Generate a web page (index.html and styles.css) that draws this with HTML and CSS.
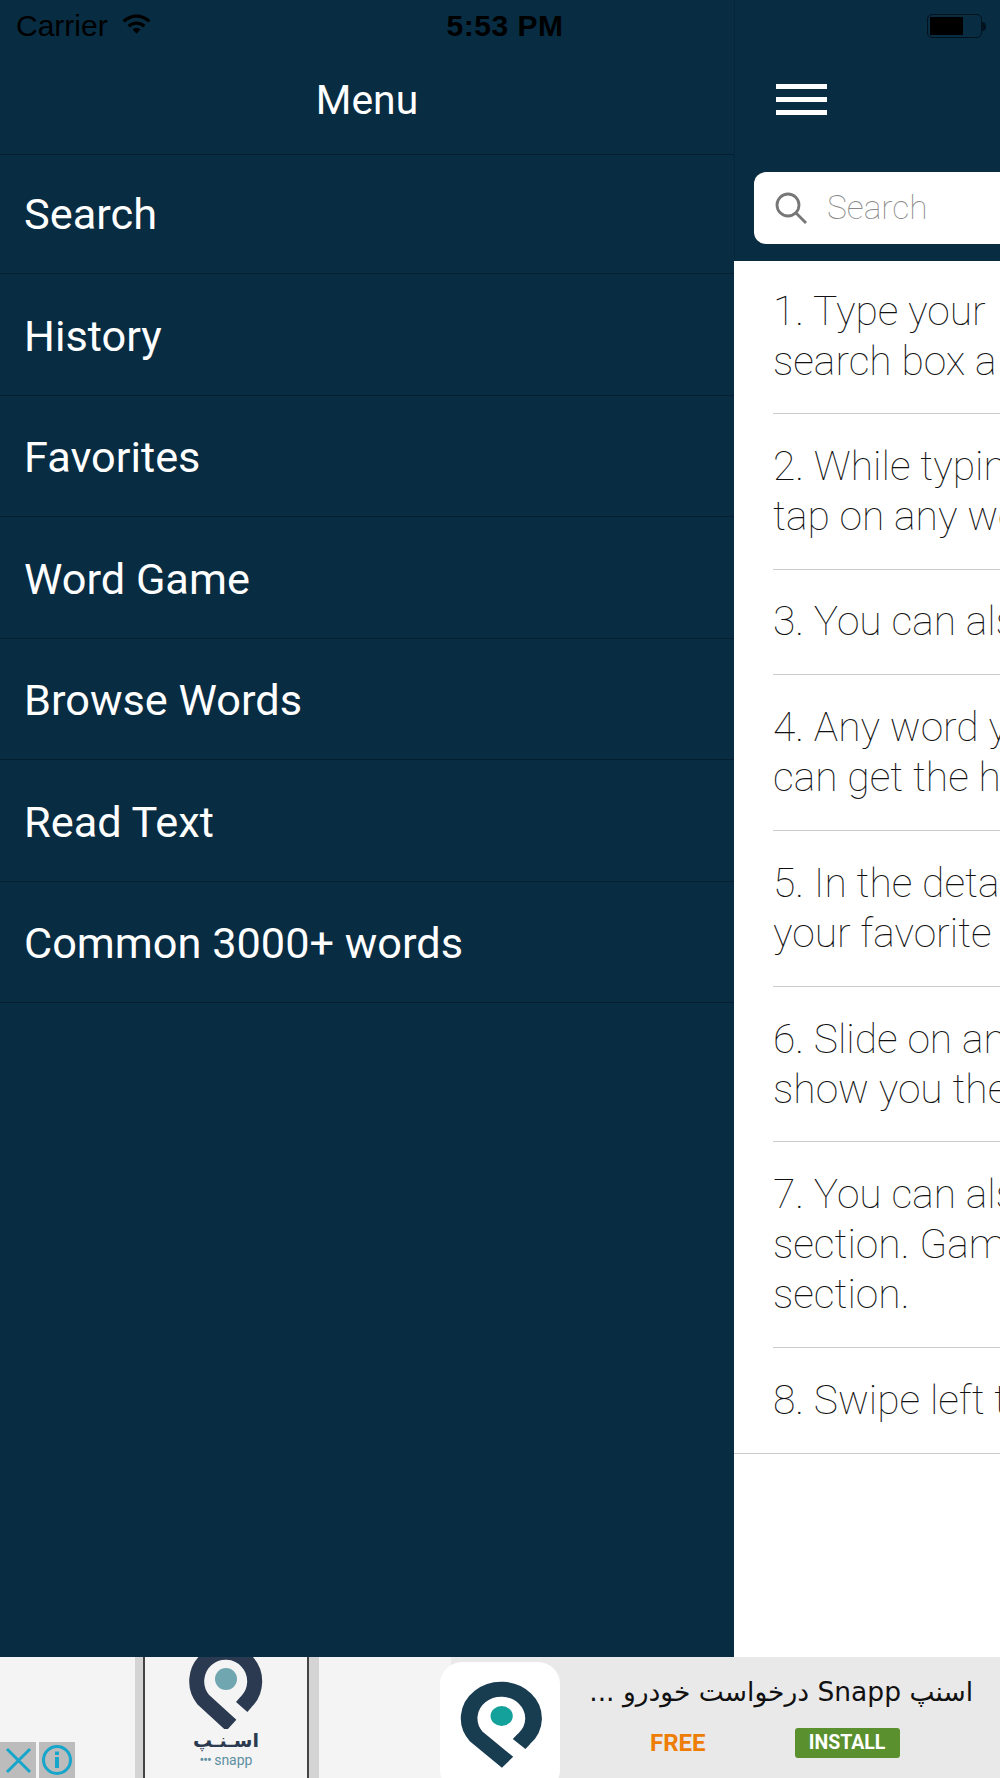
FILE: index.html
```html
<!DOCTYPE html>
<html lang="en">
<head>
<meta charset="utf-8">
<title>Menu</title>
<link rel="stylesheet" href="styles.css">
</head>
<body>
<div class="app">
  <div class="statusbar">
    <div class="status-left">
      <span>Carrier</span>
      <svg class="wifi" viewBox="0 0 30 22"><path d="M1 8.200C9 .6 21 .6 29 8.200l-2.300 2.400C20 4.200 10 4.200 3.300 10.600z"/><path d="M6 13C11 8.300 19 8.300 24 13l-2.400 2.400C18 12 12 12 8.400 15.400z"/><path d="M11 17.600c2.400-2 5.600-2 8 0L15 21.800z"/></svg>
    </div>
    <div class="status-time">5:53 PM</div>
    <div class="status-right">
      <div class="battery"><div class="battery-level"></div></div>
      <div class="battery-cap"></div>
    </div>
  </div>
  <main class="main">
    <nav class="drawer">
      <header class="drawer-head">Menu</header>
      <ul class="menu">
        <li class="menu-item menu-first">Search</li>
        <li class="menu-item">History</li>
        <li class="menu-item">Favorites</li>
        <li class="menu-item">Word Game</li>
        <li class="menu-item">Browse Words</li>
        <li class="menu-item">Read Text</li>
        <li class="menu-item">Common 3000+ words</li>
      </ul>
    </nav>
    <section class="page">
      <header class="page-head">
        <div class="burger"><span></span><span></span><span></span></div>
        <div class="searchbox">
          <svg class="search-icon" viewBox="0 0 32 32"><circle cx="13" cy="13" r="11" /><path d="M21 21l10 10"/></svg>
          <span class="placeholder">Search</span>
        </div>
      </header>
      <div class="help">
        <p class="help-item help-first">1. Type your<br>search box a</p>
        <p class="help-item">2. While typing<br>tap on any wo</p>
        <p class="help-item">3. You can also</p>
        <p class="help-item">4. Any word you<br>can get the he</p>
        <p class="help-item">5. In the details<br>your favorite</p>
        <p class="help-item">6. Slide on any<br>show you the</p>
        <p class="help-item">7. You can also<br>section. Game<br>section.</p>
        <p class="help-item help-last">8. Swipe left to</p>
      </div>
    </section>
  </main>
  <aside class="ad">
    <div class="ad-left">
      <div class="ad-shot">
        <svg class="shot-logo" viewBox="12 12 84 92"><path class="shot-pin" d="M69.700 82L74 77A29 29 0 1 0 31.300 74.700L59.300 100.300"/><circle class="shot-dot" cx="54" cy="54" r="11"/></svg>
        <div class="shot-fa" dir="rtl" lang="fa">اسـنـپ</div>
        <div class="shot-en"><span class="shot-dots">•••</span> snapp</div>
      </div>
      <div class="ad-controls">
        <span class="ad-btn"><svg viewBox="0 0 36 36"><path d="M7 7l23 23M30 7L7 30"/></svg></span>
        <span class="ad-btn"><svg viewBox="0 0 36 36"><circle cx="18" cy="18" r="13.500"/><rect class="info-mark" x="16" y="15" width="4" height="11"/><rect class="info-mark" x="16" y="9.500" width="4" height="3.500"/></svg></span>
      </div>
    </div>
    <div class="ad-right">
      <div class="ad-icon">
        <svg viewBox="-1.500 0 108 116" preserveAspectRatio="none"><path class="ad-pin" d="M69.700 82L74 77A29 29 0 1 0 31.300 74.700L59.300 100.300"/><circle class="ad-dot" cx="54" cy="54" r="10"/></svg>
      </div>
      <div class="ad-info">
        <div class="ad-title" dir="rtl" lang="fa">اسنپ Snapp درخواست خودرو ...</div>
        <div class="ad-actions">
          <span class="ad-free">FREE</span>
          <span class="ad-install">INSTALL</span>
        </div>
      </div>
    </div>
  </aside>
</div>
</body>
</html>
```
FILE: styles.css
```css
* { box-sizing: border-box; }
html, body { margin: 0; padding: 0; }
body { width: 1000px; height: 1778px; overflow: hidden; font-family: Roboto, "Liberation Sans", sans-serif; background: #082c42; }
.app { position: relative; display: flex; flex-direction: column; width: 1000px; height: 1778px; }

.statusbar { position: absolute; top: 0; left: 0; right: 0; height: 52px; display: grid; grid-template-columns: 1fr auto 1fr; align-items: center; padding: 0 14px 0 16px; font-family: "Liberation Sans", sans-serif; font-size: 30px; color: #000; }
.status-left { display: flex; align-items: center; gap: 13px; }
.wifi { width: 31px; height: 22px; margin-bottom: 6px; fill: #000; }
.status-time { margin-left: 8px; font-weight: 700; font-size: 30px; letter-spacing: 0.500px; }
.status-right { display: flex; justify-content: flex-end; align-items: center; }
.battery { width: 55px; height: 24px; border: 1.500px solid #02121e; border-radius: 5px; padding: 2px; }
.battery-level { width: 33px; height: 100%; background: #000; }
.battery-cap { width: 4px; height: 9px; background: #02121e; border-radius: 0 4px 4px 0; }

.main { display: flex; height: 1657px; }
.drawer { width: 734px; flex: none; background: #082c42; }
.drawer-head { height: 155px; padding-top: 75px; text-align: center; font-size: 40.800px; line-height: 50px; color: #fff; border-bottom: 1px solid #051f31; }
.menu { list-style: none; margin: 0; padding: 0; }
.menu-item { height: 121.500px; padding: 4px 24px 0; display: flex; align-items: center; font-size: 43.300px; color: #fff; border-bottom: 1px solid #051f31; }
.menu-first { height: 119px; padding-top: 0; }

.page { flex: 1; min-width: 0; overflow: hidden; background: #fff; }
.page-head { height: 261px; background: #082c42; border-left: 1px solid #05263b; padding: 84px 0 0 19px; }
.burger { display: flex; flex-direction: column; gap: 8.500px; width: 51px; margin-left: 22px; }
.burger span { height: 4.500px; background: #fff; }
.searchbox { display: flex; align-items: center; gap: 20px; width: 300px; height: 72px; margin-top: 57px; padding-left: 21px; background: #fff; border-radius: 12px; }
.search-icon { width: 32px; height: 32px; fill: none; stroke: #777; stroke-width: 2.800px; }
.placeholder { font-size: 33.500px; font-weight: 100; color: #888; }

.help { width: 266px; }
.help-item { margin: 0 0 0 39px; padding: 26.800px 0 27.900px; width: 400px; font-size: 40.800px; line-height: 50px; font-weight: 100; color: #111; white-space: nowrap; border-bottom: 1px solid #ccc; }
.help-first { padding: 25px 0 27px; }
.help-last { margin-left: 0; padding-left: 39px; }

.ad { display: flex; height: 121px; background: #f4f4f4; overflow: hidden; }
.ad-left { position: relative; width: 451px; display: flex; }
.ad-shot { width: 184px; height: 121px; margin-left: 135px; border-left: 8px solid #d4d4d4; border-right: 10px solid #d4d4d4; display: flex; flex-direction: column; align-items: center; box-shadow: inset 2px 0 0 #444, inset -2px 0 0 #444; overflow: hidden; }
.shot-logo { width: 84px; height: 92px; margin-top: -20px; flex: none; }
.shot-pin { fill: none; stroke: #2b3a50; stroke-width: 15; }
.shot-dot { fill: #6fa6b0; }
.shot-fa { font-family: "DejaVu Sans", sans-serif; font-size: 19px; line-height: 23px; font-weight: 700; color: #2b3a50; }
.shot-en { font-size: 14px; line-height: 16px; color: #5d8fa0; }
.shot-dots { letter-spacing: -1px; }
.ad-controls { position: absolute; left: 0; bottom: 0; display: flex; gap: 3px; }
.ad-btn { display: block; width: 36px; height: 36px; background: #bcbcbc; }
.ad-btn svg { display: block; width: 36px; height: 36px; fill: none; stroke: #16a5cb; stroke-width: 3; }
.ad-btn .info-mark { fill: #16a5cb; stroke: none; }

.ad-right { flex: 1; display: flex; background: #e9e9e9; padding: 5px 0 0 0; position: relative; }
.ad-icon { width: 120px; height: 130px; margin-left: -11px; background: #fff; border-radius: 22px; flex: none; }
.ad-icon svg { display: block; width: 120px; height: 116px; }
.ad-pin { fill: none; stroke: #183c50; stroke-width: 15; }
.ad-dot { fill: #14a19c; }
.ad-info { flex: 1; min-width: 0; }
.ad-title { font-family: "DejaVu Sans", sans-serif; font-size: 26.500px; line-height: 36px; color: #111; margin-top: 12px; padding-right: 27px; white-space: nowrap; }
.ad-actions { display: flex; align-items: center; gap: 89px; margin-top: 18px; padding-left: 90px; }
.ad-free { font-size: 24px; font-weight: 700; color: #ee7d05; }
.ad-install { display: block; width: 105px; height: 30px; line-height: 30px; text-align: center; background: #5a902e; border-radius: 3px; font-size: 19.500px; font-weight: 700; color: #fff; }
```
